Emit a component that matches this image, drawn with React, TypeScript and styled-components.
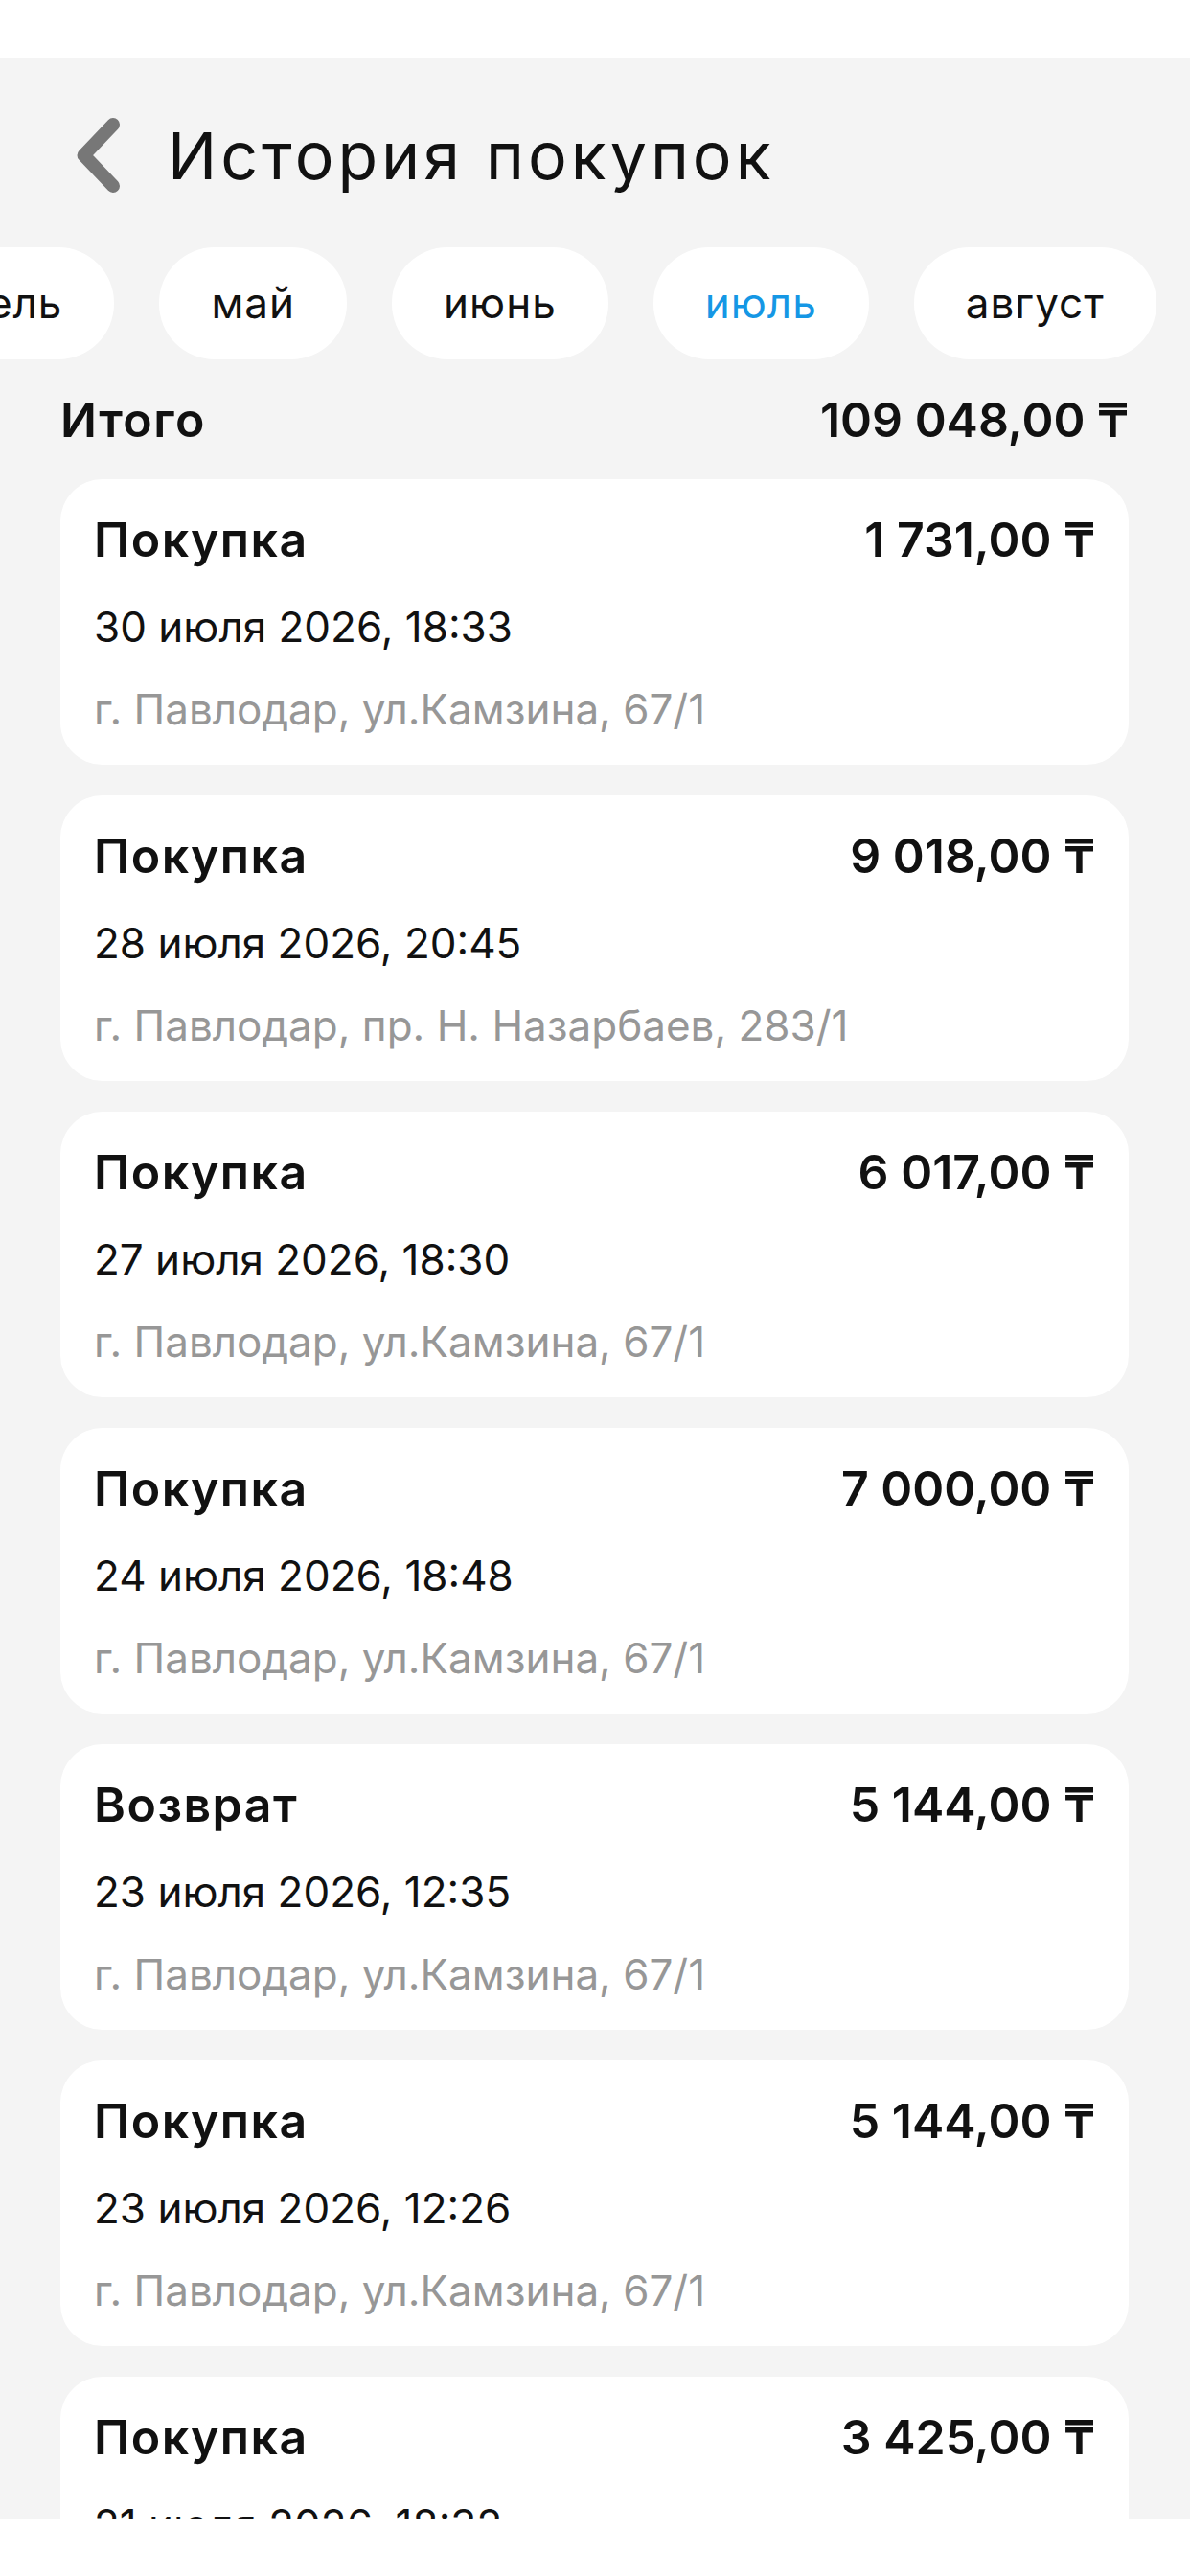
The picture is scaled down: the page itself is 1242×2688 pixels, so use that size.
import React, { useLayoutEffect, useRef } from 'react';
import styled, { createGlobalStyle } from 'styled-components';

const GlobalStyle = createGlobalStyle`
  html, body {
    margin: 0;
    padding: 0;
    background: #ffffff;
  }
  body {
    font-family: 'Inter', 'Noto Sans', 'DejaVu Sans', sans-serif;
    color: #111111;
  }
`;

const Page = styled.div`
  width: 1242px;
  height: 2688px;
  padding: 60px 0;
  box-sizing: border-box;
  background: #ffffff;
`;

const Screen = styled.div`
  height: 100%;
  background: #f4f4f4;
  overflow: hidden;
`;

const Header = styled.div`
  display: flex;
  align-items: center;
  gap: 50px;
  padding: 62px 0 0 80px;
`;

const BackButton = styled.button`
  border: 0;
  padding: 0;
  background: none;
  display: flex;
  cursor: pointer;
`;

const Title = styled.h1`
  margin: 0;
  font-size: 68px;
  line-height: 80px;
  font-weight: 400;
  letter-spacing: 4px;
  color: #111111;
`;

const MonthStrip = styled.div`
  display: flex;
  gap: 47px;
  margin-top: 56px;
  overflow-x: auto;
  scrollbar-width: none;
  &::-webkit-scrollbar {
    display: none;
  }
`;

const MonthChip = styled.button<{ $active?: boolean }>`
  flex: 0 0 auto;
  height: 117px;
  padding: 0 54px;
  border: 0;
  border-radius: 58px;
  background: #ffffff;
  font-family: inherit;
  font-size: 44px;
  line-height: 117px;
  font-weight: 400;
  letter-spacing: 1px;
  color: ${p => (p.$active ? '#1597e5' : '#111111')};
  cursor: pointer;
`;

const TotalRow = styled.div`
  display: flex;
  justify-content: space-between;
  align-items: center;
  margin-top: 33px;
  padding: 0 64px 0 63px;
  font-size: 50px;
  line-height: 60px;
  font-weight: 600;
`;

const CardList = styled.div`
  display: flex;
  flex-direction: column;
  gap: 32px;
  margin-top: 32px;
  padding: 0 64px 0 63px;
`;

const Card = styled.div`
  flex: 0 0 auto;
  height: 298px;
  box-sizing: border-box;
  padding: 33px 35px 0;
  background: #ffffff;
  border-radius: 44px;
`;

const CardHead = styled.div`
  display: flex;
  justify-content: space-between;
  font-size: 50px;
  line-height: 60px;
  font-weight: 600;
`;

const Label = styled.span`
  letter-spacing: 1.5px;
`;

const CardLine = styled.div<{ $muted?: boolean }>`
  font-size: 44px;
  line-height: 54px;
  color: ${p => (p.$muted ? '#979797' : '#111111')};
  margin-top: ${p => (p.$muted ? '32px' : '34px')};
  white-space: nowrap;
`;

const months = ['январь', 'февраль', 'март', 'апрель', 'май', 'июнь', 'июль', 'август', 'сентябрь'];

const KAMZINA = 'г. Павлодар, ул.Камзина, 67/1';

const purchases = [
  { kind: 'Покупка', sum: '1 731,00 ₸', date: '30 июля 2026, 18:33', place: KAMZINA },
  { kind: 'Покупка', sum: '9 018,00 ₸', date: '28 июля 2026, 20:45', place: 'г. Павлодар, пр. Н. Назарбаев, 283/1' },
  { kind: 'Покупка', sum: '6 017,00 ₸', date: '27 июля 2026, 18:30', place: KAMZINA },
  { kind: 'Покупка', sum: '7 000,00 ₸', date: '24 июля 2026, 18:48', place: KAMZINA },
  { kind: 'Возврат', sum: '5 144,00 ₸', date: '23 июля 2026, 12:35', place: KAMZINA },
  { kind: 'Покупка', sum: '5 144,00 ₸', date: '23 июля 2026, 12:26', place: KAMZINA },
  { kind: 'Покупка', sum: '3 425,00 ₸', date: '21 июля 2026, 18:32', place: KAMZINA },
];

function ChevronLeft() {
  return (
    <svg width="45" height="78" viewBox="0 0 45 78" fill="none" xmlns="http://www.w3.org/2000/svg">
      <path d="M38 7L7.5 39L38 71" stroke="#777777" strokeWidth="14" strokeLinecap="round" strokeLinejoin="round" />
    </svg>
  );
}

function App() {
  const stripRef = useRef<HTMLDivElement>(null);
  const firstShownRef = useRef<HTMLButtonElement>(null);

  // strip is scrolled so that "май" starts where it does on the phone
  useLayoutEffect(() => {
    const strip = stripRef.current;
    const chip = firstShownRef.current;
    if (!strip || !chip) return;
    const delta = chip.getBoundingClientRect().left - strip.getBoundingClientRect().left;
    strip.scrollLeft += delta - 166;
  }, []);

  return (
    <Page>
      <GlobalStyle />
      <Screen>
        <Header>
          <BackButton type="button" aria-label="Назад">
            <ChevronLeft />
          </BackButton>
          <Title>История покупок</Title>
        </Header>

        <MonthStrip ref={stripRef}>
          {months.map(m => (
            <MonthChip
              key={m}
              type="button"
              $active={m === 'июль'}
              ref={m === 'май' ? firstShownRef : undefined}
            >
              {m}
            </MonthChip>
          ))}
        </MonthStrip>

        <TotalRow>
          <Label>Итого</Label>
          <span>109 048,00 ₸</span>
        </TotalRow>

        <CardList>
          {purchases.map((p, i) => (
            <Card key={i}>
              <CardHead>
                <Label>{p.kind}</Label>
                <span>{p.sum}</span>
              </CardHead>
              <CardLine>{p.date}</CardLine>
              <CardLine $muted>{p.place}</CardLine>
            </Card>
          ))}
        </CardList>
      </Screen>
    </Page>
  );
}

export default App;
